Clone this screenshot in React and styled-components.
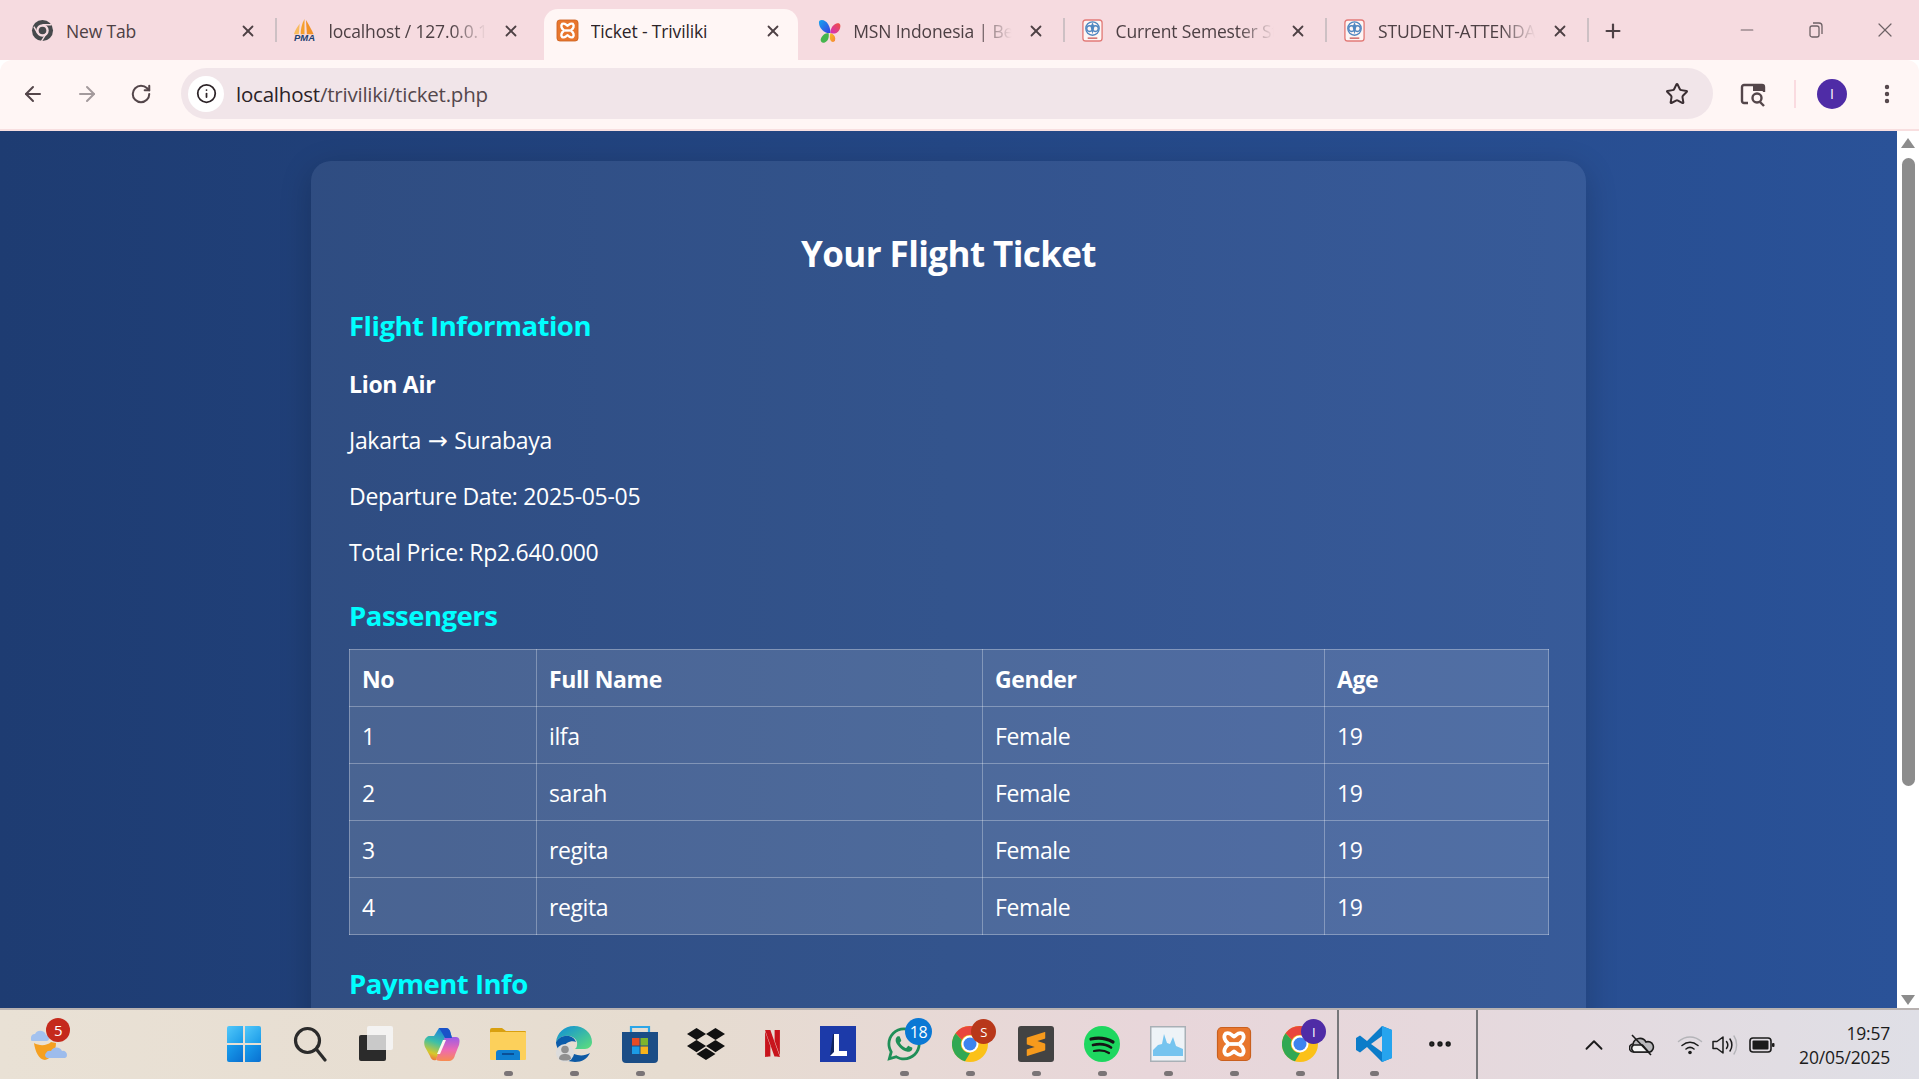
import React from "react";
import styled, { createGlobalStyle } from "styled-components";
import { ArrowLeft, ArrowRight, RotateCw, Info, Star, X, Plus, Minus, ChevronUp, EllipsisVertical, Ellipsis } from "lucide-react";
import { FaDropbox, FaWhatsapp } from "react-icons/fa";
import { SiNetflix, SiSublimetext } from "react-icons/si";

const GlobalStyle = createGlobalStyle`
  html, body {
    margin: 0;
    padding: 0;
    height: 100%;
    overflow: hidden;
  }
  * { box-sizing: border-box; }
  body { font-family: "Open Sans", "Noto Sans", sans-serif; }
`;

const Screen = styled.div`
  display: flex;
  flex-direction: column;
  height: 100vh;
  overflow: hidden;
`;

/* browser chrome */
const TabStrip = styled.div`
  display: flex;
  align-items: flex-end;
  height: 60px;
  flex: none;
  padding-left: 15px;
  background: #f6dbe0;
`;

const Tab = styled.div`
  position: relative;
  display: flex;
  align-items: center;
  width: 262.4px;
  height: 51px;
  padding: 0 20px 8px 16px;
  gap: 12px;
  color: #4d4044;
  z-index: ${(p) => (p.$active ? 2 : 1)};

  ${(p) =>
    p.$sep &&
    `&::after {
      content: "";
      position: absolute;
      right: 0;
      top: 9px;
      width: 2px;
      height: 24px;
      background: #cdc0c4;
    }`}

  ${(p) =>
    p.$active &&
    `&::before {
      content: "";
      position: absolute;
      inset: 0 4px 0 4px;
      background: #fff6f5;
      border-radius: 14px 14px 0 0;
      z-index: -1;
    }`}
`;

const TabTitle = styled.span`
  flex: 1;
  min-width: 0;
  white-space: nowrap;
  overflow: hidden;
  font-size: 17.5px;
  letter-spacing: -0.15px;
  color: ${(p) => (p.$active ? "#2c2327" : "#4d4044")};
  ${(p) =>
    p.$fade &&
    `-webkit-mask-image: linear-gradient(to right, #000 76%, transparent 98%);
     mask-image: linear-gradient(to right, #000 76%, transparent 98%);`}
`;

const Favicon = styled.span`
  display: flex;
  flex: none;
  width: 23px;
  height: 23px;
`;

const NewTabButton = styled.span`
  display: flex;
  align-items: center;
  justify-content: center;
  width: 26px;
  height: 51px;
  padding-bottom: 8px;
  margin-left: 11px;
  color: #4d4044;
`;

const WindowControls = styled.div`
  display: flex;
  gap: 1px;
  margin-left: auto;
  height: 60px;
  color: #6e6266;
`;

const WindowButton = styled.span`
  display: flex;
  align-items: center;
  justify-content: center;
  width: 68px;
  height: 60px;
`;

const Toolbar = styled.div`
  display: flex;
  align-items: center;
  flex: none;
  height: 71px;
  padding: 0 0 2px 0;
  background: #fff6f5;
  border-bottom: 2px solid #f8dfe0;
  border-radius: 12px 12px 0 0;
`;

const NavButton = styled.span`
  display: flex;
  align-items: center;
  justify-content: center;
  flex: none;
  width: 54px;
  height: 44px;
  margin-left: ${(p) => p.$left || 0}px;
  color: ${(p) => (p.$off ? "#a39a9c" : "#54464a")};
`;

const NavGroup = styled.div`
  display: flex;
  padding-left: 6px;
  margin-right: 13px;
`;

const Omnibox = styled.div`
  display: flex;
  align-items: center;
  width: 1532px;
  height: 51px;
  padding: 0 24px 0 7px;
  border-radius: 26px;
  background: #f1e5e9;
`;

const InfoBadge = styled.span`
  display: flex;
  align-items: center;
  justify-content: center;
  width: 36px;
  height: 36px;
  border-radius: 50%;
  background: #fff;
  color: #2c2327;
`;

const Url = styled.span`
  flex: 1;
  margin-left: 12px;
  font-size: 20.5px;
  letter-spacing: -0.22px;
  color: #2b2226;
`;

const UrlDim = styled.span`
  color: #54474c;
`;

const ToolbarRight = styled.div`
  display: flex;
  align-items: center;
  flex: 1;
  color: #54464a;
`;

const ToolbarDivider = styled.span`
  width: 2px;
  height: 28px;
  margin: 0 21px 0 14px;
  background: #fadbe0;
`;

const Avatar = styled.span`
  display: flex;
  align-items: center;
  justify-content: center;
  width: 30px;
  height: 30px;
  border-radius: 50%;
  background: #4f2ca6;
  color: #fff;
  font-size: 14px;
`;

/* page */
const Viewport = styled.div`
  display: flex;
  flex: 1;
  min-height: 0;
`;

const Page = styled.div`
  flex: 1;
  min-width: 0;
  overflow: hidden;
  padding-top: 30px;
  background: linear-gradient(to right, #1e3c72, #2a5298);
`;

const Card = styled.div`
  width: 1275px;
  margin: 0 auto;
  padding: 38px;
  border-radius: 20px;
  background: rgba(255, 255, 255, 0.07);
  box-shadow: 0 8px 32px rgba(0, 0, 0, 0.2);
  color: #fff;
`;

const Title = styled.h1`
  margin: 31px 0 0;
  font-size: 35px;
  line-height: 48px;
  font-weight: 700;
  letter-spacing: -0.6px;
  text-align: center;
`;

const SectionTitle = styled.h2`
  margin: ${(p) => p.$top}px 0 0;
  font-size: 27.5px;
  line-height: 38px;
  font-weight: 700;
  letter-spacing: -0.5px;
  color: #00ffff;
`;

const InfoLine = styled.p`
  margin: ${(p) => p.$top || 24}px 0 0;
  font-size: 23px;
  line-height: 32px;
  letter-spacing: -0.3px;
  font-weight: ${(p) => (p.$bold ? 700 : 400)};
`;

const RouteArrow = styled.span`
  margin: 0 1px;
  font-family: "DejaVu Sans", sans-serif;
  font-size: 24px;
  line-height: 1;
`;

const PassengerTable = styled.table`
  width: 1199px;
  margin-top: 14px;
  table-layout: fixed;
  border-collapse: collapse;
  background: rgba(255, 255, 255, 0.13);
`;

const Col = styled.col`
  width: ${(p) => p.$w}px;
`;

const Th = styled.th`
  height: 57px;
  padding: 2px 12px 0;
  border: 1px solid rgba(255, 255, 255, 0.3);
  text-align: left;
  font-size: 23px;
  font-weight: 700;
  letter-spacing: -0.4px;
`;

const Td = styled.td`
  height: 57px;
  padding: 2px 12px 0;
  border: 1px solid rgba(255, 255, 255, 0.3);
  font-size: 23px;
  letter-spacing: -0.4px;
`;

const Scrollbar = styled.div`
  display: flex;
  flex-direction: column;
  align-items: center;
  flex: none;
  width: 22px;
  background: #fff;
`;

const ScrollArrow = styled.span`
  width: 0;
  height: 0;
  border-left: 7px solid transparent;
  border-right: 7px solid transparent;
  ${(p) => (p.$down ? "border-top: 10px solid #8c8c8c;" : "border-bottom: 10px solid #8c8c8c;")}
  margin: ${(p) => (p.$down ? "auto 0 3px" : "7px 0 10px")};
`;

const ScrollThumb = styled.span`
  width: 13px;
  height: 628px;
  border-radius: 7px;
  background: #8c8c8c;
`;

/* taskbar */
const Taskbar = styled.div`
  display: flex;
  align-items: stretch;
  flex: none;
  height: 71px;
  padding-left: 16px;
  border-top: 2px solid #b8b2b1;
  background: linear-gradient(to right, #e9e1d5 0%, #e6dcd0 35%, #e8d6da 60%, #e6d8dc 75%, #dfdfe6 100%);
`;

const TaskGroup = styled.div`
  display: flex;
  margin-left: ${(p) => p.$left || 0}px;
`;

const TaskItem = styled.div`
  position: relative;
  display: flex;
  align-items: center;
  justify-content: center;
  width: 66px;
  padding-bottom: 2px;
`;

const RunningDot = styled.span`
  position: absolute;
  left: 29px;
  bottom: 3px;
  width: 9px;
  height: 5px;
  border-radius: 3px;
  background: #7a7476;
`;

const Badge = styled.span`
  position: absolute;
  display: flex;
  align-items: center;
  justify-content: center;
  top: ${(p) => p.$top}px;
  left: ${(p) => p.$left}px;
  width: ${(p) => p.$size}px;
  height: ${(p) => p.$size}px;
  border-radius: 50%;
  background: ${(p) => p.$bg};
  color: #fff;
  font-size: ${(p) => p.$font}px;
  letter-spacing: -0.5px;
`;

const TaskDivider = styled.span`
  flex: none;
  width: 2px;
  margin: 0 ${(p) => p.$right}px 0 ${(p) => p.$left}px;
  background: #77777a;
`;

const Tray = styled.div`
  display: flex;
  align-items: center;
  margin-left: auto;
  padding-right: 29px;
  color: #1b1b1b;
`;

const TraySlot = styled.span`
  display: flex;
  align-items: center;
  justify-content: center;
  width: 30px;
  margin-left: ${(p) => p.$left}px;
`;

const Clock = styled.div`
  margin-left: 22px;
  text-align: right;
  font-size: 17.5px;
  line-height: 24px;
  letter-spacing: -0.2px;
  color: #1b1b1b;
`;

const Mono = ({ size = 23 }) => (
  <svg width={size} height={size} viewBox="0 0 24 24">
    <circle cx="12" cy="12" r="11" fill="#46494c" />
    <circle cx="12" cy="12" r="6.5" fill="#f6dbe0" />
    <circle cx="12" cy="12" r="4" fill="#46494c" />
    <path d="M12 6h9M7 15 3 8M16 15l-5 8" stroke="#f6dbe0" strokeWidth="1.4" />
  </svg>
);

const Pma = () => (
  <svg width="23" height="23" viewBox="0 0 24 24">
    <path d="M12 0C9 5 8 11 8 16h4z" fill="#f5a02e" />
    <path d="M13.500 1c3 5 6 10 8 15h-7z" fill="#f29228" />
    <path d="M7 5C4 9 2 12 1 16h5z" fill="#f8bb5e" />
    <text x="1" y="23" textLength="22" lengthAdjust="spacingAndGlyphs" fontSize="9" fontWeight="700" fontStyle="italic" fill="#23406f" fontFamily="Liberation Sans">PMA</text>
  </svg>
);

const Xampp = ({ size = 23 }) => (
  <svg width={size} height={size} viewBox="0 0 24 24">
    <rect x="1" y="1" width="22" height="22" rx="3" fill="#e8762d" stroke="#c9601f" strokeWidth="0.8" />
    <path d="M6.500 5c3-1 3.500 1 5.500 2 2-1 2.500-3 5.500-2 2 2 .5 5-1.500 6.500v1c2 1.500 3.500 4.500 1.500 6.500-3 1-3.500-1-5.500-2-2 1-2.500 3-5.500 2-2-2-.5-5 1.500-6.500v-1C6 10 4.500 7 6.500 5z" fill="none" stroke="#fff" strokeWidth="2.500" />
    <path d="M9 12h6" stroke="#fff" strokeWidth="2.500" />
  </svg>
);

const Msn = () => (
  <svg width="24" height="25" viewBox="0 0 24 25">
    <defs>
      <linearGradient id="msnL" x1="0" y1="0" x2="1" y2="1">
        <stop offset="0" stopColor="#12a5f0" />
        <stop offset="1" stopColor="#3a3fe0" />
      </linearGradient>
      <linearGradient id="msnR" x1="1" y1="0" x2="0" y2="1">
        <stop offset="0" stopColor="#f0523c" />
        <stop offset="1" stopColor="#d42ec0" />
      </linearGradient>
      <linearGradient id="msnB" x1="0" y1="0" x2="1" y2="1">
        <stop offset="0" stopColor="#f7c21e" />
        <stop offset="1" stopColor="#f6843a" />
      </linearGradient>
    </defs>
    <path d="M1 3c0-3 4-3 7-1 3 2 5 7 5 12-6 1-12-5-12-11z" fill="url(#msnL)" />
    <path d="M13 14c0-5 3-9 7-10 3-1 4 2 3 5-1 4-5 7-10 5z" fill="url(#msnR)" />
    <path d="M11 14c-4 0-7 3-8 6-1 3 2 5 4 4 3-1 5-5 4-10z" fill="#45b54e" />
    <path d="M13 14c-1 4-1 7 1 9 2 1 4 0 4-3 0-3-2-5-5-6z" fill="url(#msnB)" />
  </svg>
);

const Crest = () => (
  <svg width="23" height="23" viewBox="0 0 24 24">
    <rect x="2" y="1" width="20" height="22" rx="3" fill="#fdf5f4" stroke="#e27b78" strokeWidth="1.4" />
    <circle cx="12" cy="10" r="7" fill="none" stroke="#4f86c0" strokeWidth="1.400" />
    <circle cx="9" cy="10" r="3" fill="none" stroke="#4f86c0" strokeWidth="1.400" />
    <circle cx="15" cy="10" r="3" fill="none" stroke="#4f86c0" strokeWidth="1.400" />
    <path d="M12 3.500 14 8l-2 8-2-8z" fill="#4f86c0" />
    <path d="M7 20h10" stroke="#d06e6c" strokeWidth="1.600" />
  </svg>
);

const Weather = () => (
  <svg width="37" height="33" viewBox="0 0 37 33">
    <path d="M3 16c5 3 13 3 17-1l5 1c0 8-5 16-11 17C8 33 4 24 3 16z" fill="#f5a021" />
    <path d="M1 14a3 3 0 0 1-1-4 4 4 0 0 1 4-3 6 6 0 0 1 11 1 4 4 0 0 1 3 4 2.500 2.500 0 0 1-2 2z" fill="#a3c2ef" />
    <path d="M16 31a3 3 0 0 1-1-5 4 4 0 0 1 5-2 6 6 0 0 1 11 0 4 4 0 0 1 5 4 3 3 0 0 1-2 3z" fill="#9dbcec" />
  </svg>
);

const Start = () => (
  <svg width="36" height="36" viewBox="0 0 36 36">
    <defs>
      <linearGradient id="winTop" x1="0" y1="0" x2="1" y2="1">
        <stop offset="0" stopColor="#52c8fa" />
        <stop offset="1" stopColor="#1b9be8" />
      </linearGradient>
      <linearGradient id="winBottom" x1="0" y1="0" x2="1" y2="1">
        <stop offset="0" stopColor="#19a0ee" />
        <stop offset="1" stopColor="#0a6fd0" />
      </linearGradient>
    </defs>
    <path d="M1 2a2 2 0 0 1 2-2h14v17H1z" fill="url(#winTop)" />
    <path d="M19 0h14a2 2 0 0 1 2 2v15H19z" fill="url(#winTop)" />
    <path d="M1 19h16v17H3a2 2 0 0 1-2-2z" fill="url(#winBottom)" />
    <path d="M19 19h16v15a2 2 0 0 1-2 2H19z" fill="url(#winBottom)" />
  </svg>
);

const SearchGlass = () => (
  <svg width="36" height="36" viewBox="0 0 36 36" fill="none" stroke="#2b2b2b" strokeWidth="3.2" strokeLinecap="round">
    <circle cx="15.5" cy="14.5" r="12" />
    <path d="M25 24l8 10" />
  </svg>
);

const TaskView = () => (
  <svg width="36" height="36" viewBox="0 0 36 36">
    <rect x="1" y="9" width="27" height="26" rx="2" fill="#2b2b2b" />
    <rect x="9" y="0" width="26" height="24" rx="2" fill="#f4f3f2" />
    <rect x="9" y="9" width="19" height="15" fill="#c9c9c9" />
  </svg>
);

const Copilot = () => (
  <svg width="36" height="34" viewBox="0 0 36 34">
    <defs>
      <linearGradient id="copA" x1="0.6" y1="0" x2="0.3" y2="1">
        <stop offset="0" stopColor="#1b7be0" />
        <stop offset="0.45" stopColor="#3cc0a8" />
        <stop offset="0.8" stopColor="#d8c82a" />
        <stop offset="1" stopColor="#f0703c" />
      </linearGradient>
      <linearGradient id="copB" x1="0.5" y1="0" x2="0.5" y2="1">
        <stop offset="0" stopColor="#9a5ce8" />
        <stop offset="0.55" stopColor="#ee6ab0" />
        <stop offset="1" stopColor="#f78c50" />
      </linearGradient>
    </defs>
    <path d="M15 1h7c2 0 3 1 4 3l2 7h-7L12 33c-3 1-5-1-6-4L1 20c-2-5 0-10 4-11l5 0z" fill="url(#copA)" />
    <path d="M22 10h10c4 0 4 4 3 8l-4 10c-1 4-3 6-7 6h-7c-3 0-5-1-5-2l9-22z" fill="url(#copB)" />
    <path d="M15 1h7c2 0 3 1 4 3l2 7h-7c-2-4-4-7-6-10z" fill="#1a52c8" />
    <path d="M19 13h3l-6 14h-3z" fill="#fbf6ee" />
  </svg>
);

const Folder = () => (
  <svg width="36" height="32" viewBox="0 0 36 32">
    <path d="M0 2a2 2 0 0 1 2-2h10l4 3h19a1 1 0 0 1 1 1v6H0z" fill="#d9a00f" />
    <rect y="4" width="36" height="28" rx="1" fill="#fcd05b" />
    <path d="M6 32V25a3 3 0 0 1 3-3h18a3 3 0 0 1 3 3v7z" fill="#0f7fd0" />
    <rect x="12" y="25" width="12" height="2" fill="#0a4f96" />
  </svg>
);

const Edge = () => (
  <svg width="36" height="36" viewBox="0 0 36 36">
    <defs>
      <linearGradient id="edgeA" x1="0" y1="0" x2="1" y2="1">
        <stop offset="0" stopColor="#0c8bdc" />
        <stop offset="1" stopColor="#5fe07a" />
      </linearGradient>
    </defs>
    <path d="M18 0C8 0 1 7 0 16c3-5 8-7 13-6 6 1 9 5 8 9 0 2-1 3-2 4h10c4 0 7-3 7-7C36 7 28 0 18 0z" fill="url(#edgeA)" />
    <path d="M0 16c3-5 8-7 13-6 4 1 6 3 7 6-2-1-6-1-9 1-3 2-4 6-3 10C3 25 0 21 0 16z" fill="#0b5cab" />
    <path d="M19 36c7 0 12-3 15-9-5 3-11 3-16 1l-6 7z" fill="#0c59a4" />
    <circle cx="9" cy="27" r="9" fill="#dcdcdc" />
    <circle cx="9" cy="23.500" r="3.800" fill="#8f8f8f" />
    <path d="M3 33c0-4 3-5 6-5s6 1 6 5c-3 2-9 2-12 0z" fill="#8f8f8f" />
  </svg>
);

const Store = () => (
  <svg width="36" height="38" viewBox="0 0 36 38">
    <path d="M9 7V2h18v5" fill="none" stroke="#2ca6e8" strokeWidth="2.2" />
    <path d="M0 7h36v27a4 4 0 0 1-4 4H4a4 4 0 0 1-4-4z" fill="#1b4d86" />
    <rect x="10" y="13" width="7.5" height="7.5" fill="#e74c25" />
    <rect x="18.5" y="13" width="7.5" height="7.5" fill="#7db52e" />
    <rect x="10" y="21.5" width="7.5" height="7.5" fill="#1c9ce6" />
    <rect x="18.5" y="21.5" width="7.5" height="7.5" fill="#f7b31c" />
  </svg>
);

const LBox = () => (
  <svg width="36" height="36" viewBox="0 0 36 36">
    <rect width="36" height="36" fill="#1c3aa9" />
    <path d="M10 30l4-4V8h-1z" fill="#10245f" />
    <path d="M14 8h5v17h8v5H10l4-4z" fill="#fff" />
  </svg>
);

const Chrome = () => (
  <svg width="36" height="36" viewBox="0 0 36 36">
    <circle cx="18" cy="18" r="18" fill="#fbc118" />
    <path d="M18 0a18 18 0 0 1 15.6 9H18a9 9 0 0 0-8.2 5L3.5 7.2A18 18 0 0 1 18 0z" fill="#e8453c" />
    <path d="M3.5 7.200 9.800 14A9 9 0 0 0 18 27l-5 8.300A18 18 0 0 1 3.500 7.200z" fill="#31a853" />
    <circle cx="18" cy="18" r="8.500" fill="#fff" />
    <circle cx="18" cy="18" r="6.500" fill="#3d84ee" />
  </svg>
);

const Sublime = () => (
  <svg width="36" height="36" viewBox="0 0 36 36">
    <rect width="36" height="36" rx="3" fill="#434343" />
    <foreignObject x="6" y="6" width="24" height="24">
      <SiSublimetext size={24} color="#f79a1c" />
    </foreignObject>
  </svg>
);

const Spotify = () => (
  <svg width="36" height="36" viewBox="0 0 36 36" fill="none" stroke="#151515" strokeLinecap="round">
    <circle cx="18" cy="18" r="18" fill="#1ed760" stroke="none" />
    <path d="M7 13c8-2 15-1 22 3" strokeWidth="3.2" />
    <path d="M9 19c6-1.500 13-1 18 2.500" strokeWidth="2.700" />
    <path d="M10 25c5-1 11-.5 15 2" strokeWidth="2.200" />
  </svg>
);

const TaskManager = () => (
  <svg width="36" height="36" viewBox="0 0 36 36">
    <rect x="0.500" y="0.500" width="35" height="35" fill="#eef3f7" stroke="#a9b0b6" strokeWidth="2" />
    <path d="M3 30V24l5-5 4-1 2-10 3 9 3 1 3-7 3 9 7 3v7z" fill="#75c4ef" />
  </svg>
);

const VsCode = () => (
  <svg width="36" height="36" viewBox="0 0 36 36">
    <path d="M26 0 11 15 4 9.500 0 12v12l4 2.500 7-5.500 15 15 10-4V4zm0 10v16l-11-8z" fill="#0b7cc9" />
    <path d="M26 0l10 4v28l-10 4z" fill="#26a4ee" />
  </svg>
);

const Cloud = () => (
  <svg width="26" height="22" viewBox="0 0 26 22" fill="none" stroke="#1b1b1b" strokeWidth="1.600">
    <path d="M5 18a4 4 0 0 1-1-8 7 7 0 0 1 13-2 5 5 0 0 1 4 10z" fill="#b9b9bc" />
    <path d="M5 18a4 4 0 0 1-.5-7h9l6 7z" fill="#f4f4f4" />
    <path d="M3 1l19 20" />
  </svg>
);

const WifiIcon = () => (
  <svg width="26" height="20" viewBox="0 0 26 20" fill="none" strokeLinecap="round">
    <path d="M1.500 6.500c7-6 16-6 23 0" stroke="#b4b4b8" strokeWidth="1.500" />
    <path d="M5 10.500c5-4 11-4 16 0" stroke="#1b1b1b" strokeWidth="1.600" />
    <path d="M9 14c2.500-2 5.500-2 8 0" stroke="#1b1b1b" strokeWidth="1.600" />
    <circle cx="13" cy="17.500" r="1.800" fill="#1b1b1b" />
  </svg>
);

const VolumeIcon = () => (
  <svg width="26" height="24" viewBox="0 0 26 24" fill="none" strokeLinecap="round" strokeLinejoin="round">
    <path d="M1 8.500h4L11 4v16l-6-4.500H1z" stroke="#1b1b1b" strokeWidth="1.500" />
    <path d="M14.500 8.500c1.500 2 1.500 5 0 7M18 6c2.500 3.500 2.500 8.500 0 12" stroke="#1b1b1b" strokeWidth="1.500" />
    <path d="M22 3c3.500 5 3.500 13 0 18" stroke="#b4b4b8" strokeWidth="1.400" />
  </svg>
);

const Battery = () => (
  <svg width="26" height="18" viewBox="0 0 26 18">
    <rect x="1" y="2" width="21" height="14" rx="3" fill="none" stroke="#1b1b1b" strokeWidth="1.600" />
    <rect x="3.500" y="4.500" width="16" height="9" rx="1" fill="#1b1b1b" />
    <rect x="23" y="7" width="2.500" height="4" rx="1" fill="#1b1b1b" />
  </svg>
);

const SidePanelSearch = () => (
  <svg width="28" height="28" viewBox="0 0 28 28" fill="none" stroke="#54464a" strokeWidth="2.400">
    <path d="M9 23H5a2 2 0 0 1-2-2V7a2 2 0 0 1 2-2h18a2 2 0 0 1 2 2v5" />
    <path d="M14 5h11v6H14z" fill="#54464a" stroke="none" />
    <circle cx="18" cy="18" r="4.500" />
    <path d="M21 22l4 4" />
  </svg>
);

const tabs = [
  { title: "New Tab", icon: <Mono /> },
  { title: "localhost / 127.0.0.1", icon: <Pma />, fade: true },
  { title: "Ticket - Triviliki", icon: <Xampp />, active: true },
  { title: "MSN Indonesia | Be", icon: <Msn />, fade: true, sep: true },
  { title: "Current Semester St", icon: <Crest />, fade: true, sep: true },
  { title: "STUDENT-ATTENDA", icon: <Crest />, fade: true, sep: true },
];

const passengers = [
  { no: 1, name: "ilfa", gender: "Female", age: 19 },
  { no: 2, name: "sarah", gender: "Female", age: 19 },
  { no: 3, name: "regita", gender: "Female", age: 19 },
  { no: 4, name: "regita", gender: "Female", age: 19 },
];

const pinned = [
  { key: "start", icon: <Start /> },
  { key: "search", icon: <SearchGlass /> },
  { key: "view", icon: <TaskView /> },
  { key: "copilot", icon: <Copilot /> },
  { key: "files", icon: <Folder />, dot: true },
  { key: "edge", icon: <Edge />, dot: true },
  { key: "store", icon: <Store />, dot: true },
  { key: "dropbox", icon: <FaDropbox size={38} color="#111" /> },
  { key: "netflix", icon: <SiNetflix size={27} color="#c8141c" /> },
  { key: "lbox", icon: <LBox /> },
  {
    key: "whatsapp",
    icon: <FaWhatsapp size={38} color="#1f8f58" />,
    dot: true,
    badge: <Badge $top={8} $left={34} $size={27} $bg="#0a78d4" $font={16}>18</Badge>,
  },
  {
    key: "chrome1",
    icon: <Chrome />,
    dot: true,
    badge: <Badge $top={9} $left={34} $size={25} $bg="#b8381a" $font={13}>S</Badge>,
  },
  { key: "sublime", icon: <Sublime />, dot: true },
  { key: "spotify", icon: <Spotify />, dot: true },
  { key: "taskmgr", icon: <TaskManager />, dot: true },
  { key: "xampp", icon: <Xampp size={36} />, dot: true },
  {
    key: "chrome2",
    icon: <Chrome />,
    dot: true,
    badge: <Badge $top={9} $left={34} $size={25} $bg="#4f2ca6" $font={13}>I</Badge>,
  },
];

const App = () => {
  return (
    <Screen>
      <GlobalStyle />
      <TabStrip>
        {tabs.map((tab, index) => (
          <Tab key={index} $active={tab.active} $sep={index === 0 || tab.sep}>
            <Favicon>{tab.icon}</Favicon>
            <TabTitle $active={tab.active} $fade={tab.fade}>{tab.title}</TabTitle>
            <X size={18} strokeWidth={2.4} />
          </Tab>
        ))}
        <NewTabButton><Plus size={22} strokeWidth={2.4} /></NewTabButton>
        <WindowControls>
          <WindowButton><Minus size={20} strokeWidth={1.3} /></WindowButton>
          <WindowButton>
            <svg width="16" height="16" viewBox="0 0 16 16" fill="none" stroke="currentColor" strokeWidth="1.300">
              <rect x="2" y="4" width="9" height="11" rx="2" />
              <path d="M5 1h6a3 3 0 0 1 3 3v8" />
            </svg>
          </WindowButton>
          <WindowButton><X size={24} strokeWidth={1.2} /></WindowButton>
        </WindowControls>
      </TabStrip>

      <Toolbar>
        <NavGroup>
          <NavButton><ArrowLeft size={24} strokeWidth={2} /></NavButton>
          <NavButton $off><ArrowRight size={24} strokeWidth={2} /></NavButton>
          <NavButton><RotateCw size={22} strokeWidth={2.2} /></NavButton>
        </NavGroup>
        <Omnibox>
          <InfoBadge><Info size={21} strokeWidth={2} /></InfoBadge>
          <Url>localhost<UrlDim>/triviliki/ticket.php</UrlDim></Url>
          <Star size={24} strokeWidth={2} color="#3a2e32" />
        </Omnibox>
        <ToolbarRight>
          <NavButton $left={13}><SidePanelSearch /></NavButton>
          <ToolbarDivider />
          <Avatar>I</Avatar>
          <NavButton $left={13}><EllipsisVertical size={24} strokeWidth={2.4} /></NavButton>
        </ToolbarRight>
      </Toolbar>

      <Viewport>
        <Page>
          <Card>
            <Title>Your Flight Ticket</Title>
            <SectionTitle $top={29}>Flight Information</SectionTitle>
            <InfoLine $top={23} $bold>Lion Air</InfoLine>
            <InfoLine $top={24}>Jakarta <RouteArrow>→</RouteArrow> Surabaya</InfoLine>
            <InfoLine>Departure Date: 2025-05-05</InfoLine>
            <InfoLine>Total Price: Rp2.640.000</InfoLine>
            <SectionTitle $top={29}>Passengers</SectionTitle>
            <PassengerTable>
              <colgroup>
                <Col $w={187} />
                <Col $w={446} />
                <Col $w={342} />
                <Col $w={224} />
              </colgroup>
              <thead>
                <tr>
                  <Th>No</Th>
                  <Th>Full Name</Th>
                  <Th>Gender</Th>
                  <Th>Age</Th>
                </tr>
              </thead>
              <tbody>
                {passengers.map((p) => (
                  <tr key={p.no}>
                    <Td>{p.no}</Td>
                    <Td>{p.name}</Td>
                    <Td>{p.gender}</Td>
                    <Td>{p.age}</Td>
                  </tr>
                ))}
              </tbody>
            </PassengerTable>
            <SectionTitle $top={30}>Payment Info</SectionTitle>
          </Card>
        </Page>
        <Scrollbar>
          <ScrollArrow />
          <ScrollThumb />
          <ScrollArrow $down />
        </Scrollbar>
      </Viewport>

      <Taskbar>
        <TaskItem>
          <Weather />
          <Badge $top={8} $left={30} $size={24} $bg="#c52a1c" $font={15}>5</Badge>
        </TaskItem>
        <TaskGroup $left={129}>
          {pinned.map((item) => (
            <TaskItem key={item.key}>
              {item.icon}
              {item.badge}
              {item.dot && <RunningDot />}
            </TaskItem>
          ))}
        </TaskGroup>
        <TaskDivider $left={4} $right={2} />
        <TaskItem>
          <VsCode />
          <RunningDot />
        </TaskItem>
        <TaskItem><Ellipsis size={28} strokeWidth={2.6} color="#1b1b1b" /></TaskItem>
        <TaskDivider $left={3} $right={0} />
        <Tray>
          <TraySlot $left={0}><ChevronUp size={32} strokeWidth={1.5} /></TraySlot>
          <TraySlot $left={18}><Cloud /></TraySlot>
          <TraySlot $left={18}><WifiIcon /></TraySlot>
          <TraySlot $left={5}><VolumeIcon /></TraySlot>
          <TraySlot $left={7}><Battery /></TraySlot>
          <Clock>
            <div>19:57</div>
            <div>20/05/2025</div>
          </Clock>
        </Tray>
      </Taskbar>
    </Screen>
  );
};

export default App;
